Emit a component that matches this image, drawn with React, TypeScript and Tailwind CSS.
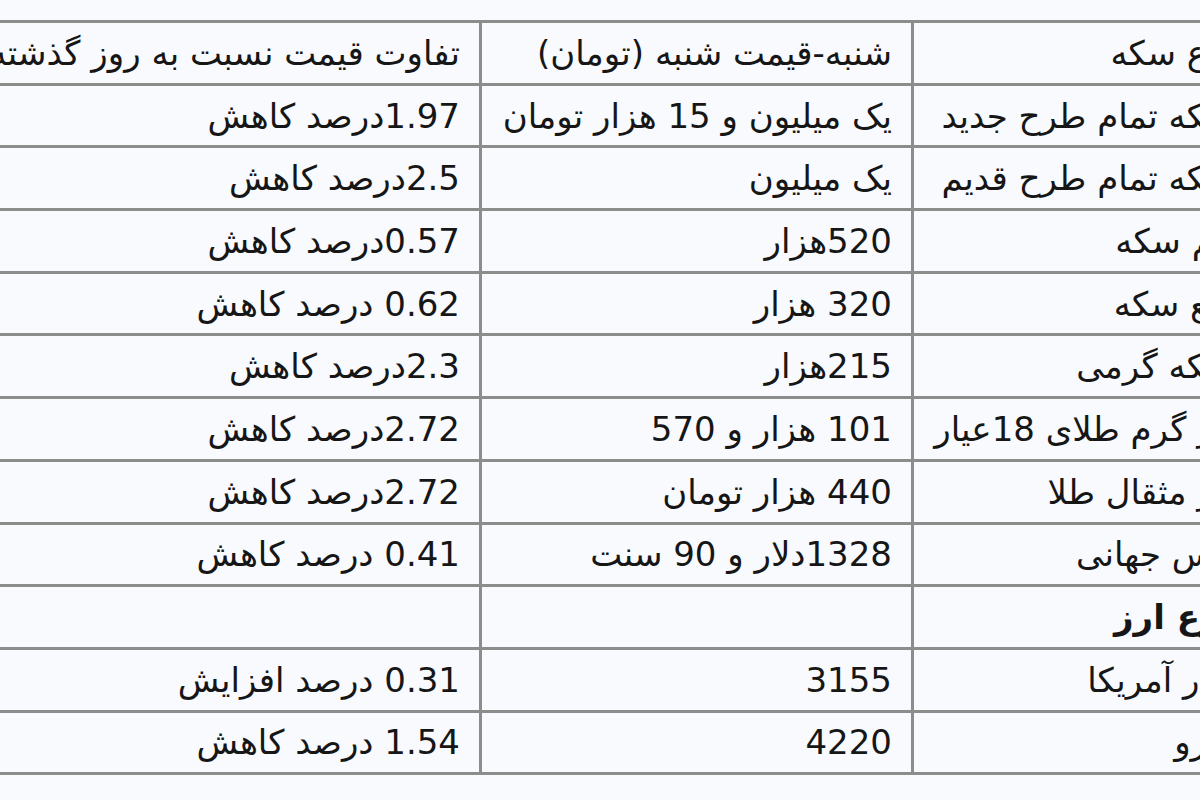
import React from 'react';

type Row = { name: string; price: string; change: string; bold?: boolean };

const rows: Row[] = [
  { name: 'سکه تمام طرح جدید', price: 'یک میلیون و 15 هزار تومان', change: '1.97درصد کاهش' },
  { name: 'سکه تمام طرح قدیم', price: 'یک میلیون', change: '2.5درصد کاهش' },
  { name: 'نیم سکه', price: '520هزار', change: '0.57درصد کاهش' },
  { name: 'ربع سکه', price: '320 هزار', change: '0.62 درصد کاهش' },
  { name: 'سکه گرمی', price: '215هزار', change: '2.3درصد کاهش' },
  { name: 'هر گرم طلای 18عیار', price: '101 هزار و 570', change: '2.72درصد کاهش' },
  { name: 'هر مثقال طلا', price: '440 هزار تومان', change: '2.72درصد کاهش' },
  { name: 'انس جهانی', price: '1328دلار و 90 سنت', change: '0.41 درصد کاهش' },
  { name: 'نوع ارز', price: '', change: '', bold: true },
  { name: 'دلار آمریکا', price: '3155', change: '0.31 درصد افزایش' },
  { name: 'یورو', price: '4220', change: '1.54 درصد کاهش' },
];

const cell = 'border-[3px] border-[#8c8c8c] h-[62.7px] pr-[19px] pl-2 text-right align-middle whitespace-nowrap';

export default function App() {
  return (
    <div className="w-[1200px] h-[800px] overflow-hidden bg-[#f8fafd] pt-[20px]">
      <div className="ml-[-198px] w-[1454px]" dir="rtl">
        <table
          className="border-collapse w-[1454px] table-fixed text-[#161616] text-[34px] leading-none"
          style={{ fontFamily: '"DejaVu Sans", Tahoma, sans-serif' }}
        >
          <colgroup>
            <col className="w-[342px]" />
            <col className="w-[432px]" />
            <col className="w-[680px]" />
          </colgroup>
          <tbody>
            <tr>
              <td className={cell}>نوع سکه</td>
              <td className={cell}>شنبه-قیمت شنبه (تومان)</td>
              <td className={cell}>تفاوت قیمت نسبت به روز گذشته</td>
            </tr>
            {rows.map((r) => (
              <tr key={r.name}>
                <td className={`${cell} ${r.bold ? 'font-bold' : ''}`}>{r.name}</td>
                <td className={cell}>{r.price}</td>
                <td className={cell}>{r.change}</td>
              </tr>
            ))}
          </tbody>
        </table>
      </div>
    </div>
  );
}
